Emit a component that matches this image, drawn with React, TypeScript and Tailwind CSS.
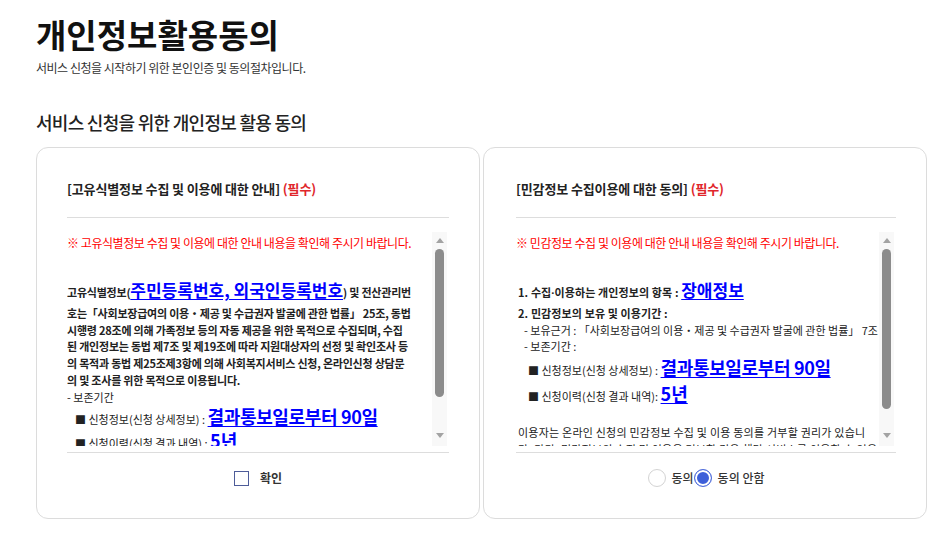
import { useState } from 'react'

const blue = 'font-bold text-[#0000ff] underline underline-offset-2 leading-none'

function CardTitle({ children }: { children: React.ReactNode }) {
  return (
    <h3 className="border-b border-[#dddddd] pb-[18px] text-[13px] leading-[20px] font-bold tracking-[-0.01em] text-[#222]">
      {children} <span className="text-[#e0262b]">(필수)</span>
    </h3>
  )
}

function Notice({ children }: { children: React.ReactNode }) {
  return (
    <p className="pt-[2px] text-[12px] leading-[17px] tracking-[-0.037em] text-[#ff0000]">※ {children}</p>
  )
}

// scrollbar drawn to look like the native one in the screenshot
function ScrollBar({ thumbTop, thumbHeight }: { thumbTop: number; thumbHeight: number }) {
  return (
    <div className="flex w-[15px] shrink-0 flex-col items-center bg-[#f8f8f8]">
      <svg className="mt-[6px] h-[5px] w-[8px]" viewBox="0 0 8 5">
        <path d="M4 0L8 5H0z" fill="#a3a3a3" />
      </svg>
      <div className="relative w-full flex-1">
        <div
          className="absolute left-[3px] w-[9px] rounded-full bg-[#8c8c8c]"
          style={{ top: thumbTop, height: thumbHeight }}
        />
      </div>
      <svg className="mb-[8px] h-[5px] w-[8px]" viewBox="0 0 8 5">
        <path d="M0 0H8L4 5z" fill="#a3a3a3" />
      </svg>
    </div>
  )
}

export default function App() {
  const [checked, setChecked] = useState(false)
  const [agree, setAgree] = useState<'yes' | 'no'>('no')

  return (
    <div className="min-h-screen bg-white px-[36px] font-['Noto_Sans_CJK_KR','Noto_Sans',sans-serif] text-[#222]">
      <h1 className="pt-[15px] text-[33px] leading-[38px] font-bold text-[#111]">개인정보활용동의</h1>
      <p className="mt-[7px] text-[12px] leading-[16px] tracking-[-0.04em] text-[#333]">
        서비스 신청을 시작하기 위한 본인인증 및 동의절차입니다.
      </p>
      <h2 className="mt-[34px] text-[18px] leading-[24px] font-medium tracking-[-0.04em] text-[#222]">
        서비스 신청을 위한 개인정보 활용 동의
      </h2>

      <div className="mt-[13px] grid w-[891px] grid-cols-2 gap-[3px]">
        {/* 고유식별정보 */}
        <section className="flex h-[372px] flex-col rounded-[12px] border border-[#dcdcdc] px-[30px] pt-[31px]">
          <CardTitle>[고유식별정보 수집 및 이용에 대한 안내]</CardTitle>
          <div className="mt-[14px] mr-[2px] flex h-[214px]">
            <div className="flex-1 overflow-hidden whitespace-nowrap">
              <Notice>고유식별정보 수집 및 이용에 대한 안내 내용을 확인해 주시기 바랍니다.</Notice>
              <div className="mt-[29px] text-[11px] leading-[16.7px] text-[#222]">
                <div className="font-bold tracking-[-0.02em]">
                  <p className="leading-[25px]">
                    고유식별정보(<span className={`${blue} text-[17px] tracking-normal`}>주민등록번호, 외국인등록번호</span>) 및 전산관리번
                  </p>
                  <p>호는「사회보장급여의 이용・제공 및 수급권자 발굴에 관한 법률」 25조, 동법</p>
                  <p>시행령 28조에 의해 가족정보 등의 자동 제공을 위한 목적으로 수집되며, 수집</p>
                  <p>된 개인정보는 동법 제7조 및 제19조에 따라 지원대상자의 선정 및 확인조사 등</p>
                  <p>의 목적과 동법 제25조제3항에 의해 사회복지서비스 신청, 온라인신청 상담문</p>
                  <p>의 및 조사를 위한 목적으로 이용됩니다.</p>
                </div>
                <p>- 보존기간</p>
                <p className="mt-[2px] pl-[8px] leading-[24px]">
                  ■ 신청정보(신청 상세정보) :{' '}
                  <span className={`${blue} text-[18px] tracking-[-0.02em]`}>결과통보일로부터 90일</span>
                </p>
                <p className="pl-[8px] leading-[24px]">
                  ■ 신청이력(신청 결과 내역) : <span className={`${blue} text-[18px]`}>5년</span>
                </p>
              </div>
            </div>
            <ScrollBar thumbTop={6} thumbHeight={148} />
          </div>
          <div className="mt-[6px] flex justify-center border-t border-[#dddddd] pt-[17px]">
            <label className="flex h-[16px] cursor-pointer items-center gap-[11px]">
              <input
                type="checkbox"
                checked={checked}
                onChange={(e) => setChecked(e.target.checked)}
                className="h-[15px] w-[15px] appearance-none border-[1.5px] border-[#4d5c99] bg-white checked:bg-[#4d5c99]"
              />
              <span className="text-[12px] font-bold text-[#333]">확인</span>
            </label>
          </div>
        </section>

        {/* 민감정보 */}
        <section className="flex h-[372px] flex-col rounded-[12px] border border-[#dcdcdc] pr-[30px] pl-[32px] pt-[31px]">
          <CardTitle>[민감정보 수집이용에 대한 동의]</CardTitle>
          <div className="mt-[14px] mr-[2px] flex h-[214px]">
            <div className="flex-1 overflow-hidden whitespace-nowrap">
              <Notice>민감정보 수집 및 이용에 대한 안내 내용을 확인해 주시기 바랍니다.</Notice>
              <div className="mt-[29px] pl-[2px] text-[11px] leading-[16.7px] text-[#222]">
                <p className="leading-[24px] font-bold tracking-[0.01em]">
                  1. 수집<span className="font-['Noto_Sans']">·</span>이용하는 개인정보의 항목 :{' '}
                  <span className={`${blue} text-[17px] tracking-normal`}>장애정보</span>
                </p>
                <p className="font-bold tracking-[0.01em]">2. 민감정보의 보유 및 이용기간 :</p>
                <p className="pl-[6px]">- 보유근거 : 「사회보장급여의 이용・제공 및 수급권자 발굴에 관한 법률」 7조</p>
                <p className="pl-[6px]">- 보존기간 :</p>
                <p className="mt-[3px] pl-[10px] leading-[24px]">
                  ■ 신청정보(신청 상세정보) :{' '}
                  <span className={`${blue} text-[18px] tracking-[-0.02em]`}>결과통보일로부터 90일</span>
                </p>
                <p className="mt-[2px] pl-[10px] leading-[24px]">
                  ■ 신청이력(신청 결과 내역): <span className={`${blue} text-[18px]`}>5년</span>
                </p>
                <div className="mt-[16px] tracking-[0.02em]">
                  <p>이용자는 온라인 신청의 민감정보 수집 및 이용 동의를 거부할 권리가 있습니</p>
                  <p>다. 다만, 민감정보의 수집 및 이용을 거부할 경우 해당 서비스를 이용할 수 없음</p>
                  <p>을 알려드립니다.</p>
                </div>
              </div>
            </div>
            <ScrollBar thumbTop={6} thumbHeight={160} />
          </div>
          <div className="mt-[6px] flex justify-center border-t border-[#dddddd] pt-[17px]">
            <div className="flex h-[16px] items-center text-[12px] font-medium text-[#333]">
              <label className="flex cursor-pointer items-center gap-[6px]">
                <input
                  type="radio"
                  name="agree"
                  checked={agree === 'yes'}
                  onChange={() => setAgree('yes')}
                  className="h-[18px] w-[18px] appearance-none rounded-full border border-[#d3d3d3] bg-white checked:border-[#5470dc] checked:bg-[#3d5fd9] checked:shadow-[inset_0_0_0_2px_white]"
                />
                동의
              </label>
              <label className="flex cursor-pointer items-center gap-[6px]">
                <input
                  type="radio"
                  name="agree"
                  checked={agree === 'no'}
                  onChange={() => setAgree('no')}
                  className="h-[18px] w-[18px] appearance-none rounded-full border border-[#d3d3d3] bg-white checked:border-[#5470dc] checked:bg-[#3d5fd9] checked:shadow-[inset_0_0_0_2px_white]"
                />
                동의 안함
              </label>
            </div>
          </div>
        </section>
      </div>
    </div>
  )
}
